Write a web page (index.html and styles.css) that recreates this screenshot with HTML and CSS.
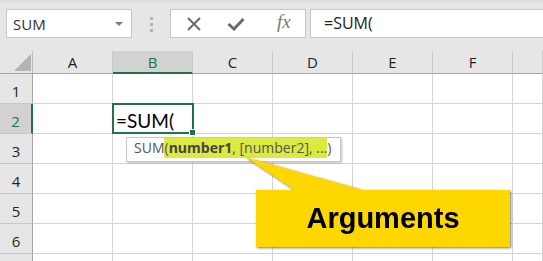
FILE: index.html
```html
<!DOCTYPE html>
<html lang="en">
<head>
    <meta charset="UTF-8">
    <title>SUM arguments</title>
<link rel="stylesheet" href="styles.css">
</head>
<body>
<div class="toolbar">
    <div class="namebox"><span>SUM</span>
        <svg class="caret" width="8" height="5" viewBox="0 0 8 5"><polygon points="0,0 8,0 4,4" fill="#7a7a7a"/></svg>
    </div>
    <div class="grip"><i></i><i></i><i></i></div>
    <div class="fbtns">
        <svg width="14" height="14" viewBox="0 0 14 14"><path d="M1 1 L13 13 M13 1 L1 13" stroke="#6b6b6b" stroke-width="2" fill="none"/></svg>
        <svg width="18" height="14" viewBox="0 0 18 14"><path d="M1.5 7 L7 12 L16.5 2" stroke="#6b6b6b" stroke-width="3" fill="none"/></svg>
        <span class="fx">fx</span>
    </div>
    <div class="fbar">=SUM(</div>
</div>
<div class="sheet">
    <div class="corner"><svg width="33" height="23" viewBox="0 0 33 23"><polygon points="14,20 31,3 31,20" fill="#b4b4b4"/></svg></div>
    <div class="ch">A</div><div class="ch sel">B</div><div class="ch">C</div><div class="ch">D</div><div class="ch">E</div><div class="ch">F</div><div class="ch"></div>

    <div class="rh">1</div><div class="c"></div><div class="c"></div><div class="c"></div><div class="c"></div><div class="c"></div><div class="c"></div><div class="c"></div>
    <div class="rh sel">2</div><div class="c"></div><div class="c active">=SUM(</div><div class="c"></div><div class="c"></div><div class="c"></div><div class="c"></div><div class="c"></div>
    <div class="rh">3</div><div class="c"></div><div class="c"></div><div class="c"></div><div class="c"></div><div class="c"></div><div class="c"></div><div class="c"></div>
    <div class="rh">4</div><div class="c"></div><div class="c"></div><div class="c"></div><div class="c"></div><div class="c"></div><div class="c"></div><div class="c"></div>
    <div class="rh">5</div><div class="c"></div><div class="c"></div><div class="c"></div><div class="c"></div><div class="c"></div><div class="c"></div><div class="c"></div>
    <div class="rh">6</div><div class="c"></div><div class="c"></div><div class="c"></div><div class="c"></div><div class="c"></div><div class="c"></div><div class="c"></div>
    <div class="rh"></div><div class="c"></div><div class="c"></div><div class="c"></div><div class="c"></div><div class="c"></div><div class="c"></div><div class="c"></div>
</div>

<div class="tip">SUM<span class="hl">(<b>number1</b>, [number2], ...</span>)</div>

<div class="callout">
    <svg class="pointer" width="125" height="36" viewBox="0 0 125 36"><polygon points="0,0 51,34 122,34" fill="#ffd700"/></svg>
    <div class="label">Arguments</div>
</div>
</body>
</html>
```

FILE: styles.css
```css
html,body{margin:0;padding:0;}
body{width:543px;height:261px;overflow:hidden;background:#fff;font-family:"Open Sans","Noto Sans",sans-serif;position:relative;}

.toolbar{height:51px;box-sizing:border-box;background:#e6e6e6;border-top:3px solid #e0e0e0;padding:6px 0 0 6px;display:flex;align-items:flex-start;}
.namebox{width:126px;height:29px;box-sizing:border-box;background:#fff;border:1px solid #c6c6c6;display:flex;align-items:center;justify-content:space-between;padding:0 8px 0 6px;font-size:15px;color:#333;}
.caret{margin-top:1px;}
.grip{width:3px;margin:8px 17px 0 18px;display:flex;flex-direction:column;gap:3px;}
.grip i{display:block;width:3px;height:3px;background:#b4b4b4;}
.fbtns{width:136px;height:29px;box-sizing:border-box;background:#fff;border:1px solid #c6c6c6;display:flex;align-items:center;padding:0 0 0 16px;gap:26px;}
.fx{font-family:"Liberation Serif",serif;font-style:italic;font-size:19px;color:#7a7a7a;margin:-3px 0 0 6px;}
.fbar{flex:1;height:29px;box-sizing:border-box;margin-left:4px;background:#fff;border:1px solid #c6c6c6;border-right:0;padding:0 0 0 13px;font-size:16px;line-height:26px;color:#222;}

.sheet{display:grid;grid-template-columns:33px repeat(6,80px) 1fr;grid-template-rows:23px repeat(7,30px);}
.sheet > div{box-sizing:border-box;}
.corner{background:#e6e6e6;border-right:1px solid #bdbdbd;border-bottom:1px solid #a6a6a6;}
.corner svg{display:block;}
.ch{background:#e6e6e6;border-right:1px solid #c8c8c8;border-bottom:1px solid #a6a6a6;font-size:15px;color:#1f1f1f;text-align:center;line-height:22px;}
.ch.sel{background:#d2d2d2;color:#217346;border-bottom:2px solid #217346;}
.rh{background:#e6e6e6;border-right:1px solid #a6a6a6;border-bottom:1px solid #c8c8c8;font-size:15px;color:#1f1f1f;text-align:center;line-height:34px;}
.rh.sel{background:#d2d2d2;color:#217346;border-right:2px solid #217346;}
.c{border-right:1px solid #d4d4d4;border-bottom:1px solid #d4d4d4;font-family:Lato,"Open Sans",sans-serif;font-size:19px;color:#000;padding:0 0 0 3px;line-height:34px;}
.c.active{position:relative;}
.c.active::before{content:"";position:absolute;left:-1px;top:-1px;right:-2px;bottom:-1px;border:2px solid #217346;}
.c.active::after{content:"";position:absolute;right:-4px;bottom:-3px;width:5px;height:5px;background:#217346;border:1px solid #fff;}

.tip{position:absolute;left:126px;top:137px;width:215px;height:25px;box-sizing:border-box;background:#fff;border:1px solid #c8c8c8;box-shadow:1px 1px 2px rgba(0,0,0,.25);padding:0 0 0 7px;font-size:14px;line-height:20px;color:#555;white-space:nowrap;}
.tip .hl{background:#dce93f;display:inline-block;line-height:20px;}
.tip b{color:#444;}

.callout{position:absolute;left:245px;top:157px;width:265px;height:91px;filter:drop-shadow(1px 1px 1px rgba(0,0,0,.55));}
.pointer{position:absolute;left:0;top:0;}
.label{position:absolute;left:11px;top:33px;width:254px;height:57px;background:#ffd700;display:flex;align-items:center;justify-content:center;font-family:"Liberation Sans",Arial,sans-serif;font-weight:bold;font-size:29px;color:#000;}
```
